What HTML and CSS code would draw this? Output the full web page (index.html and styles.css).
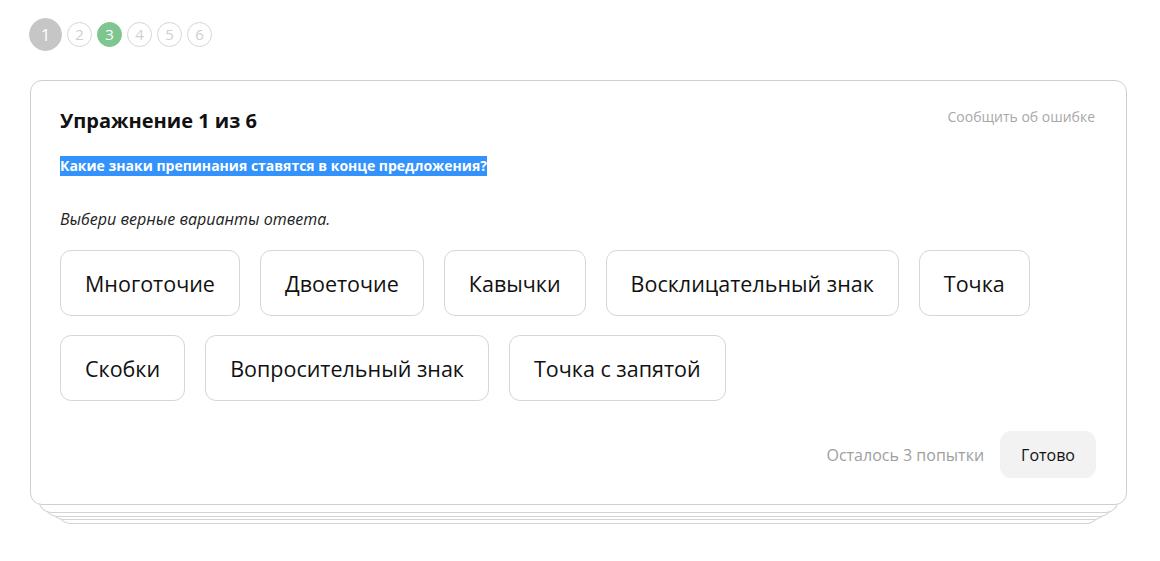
FILE: index.html
```html
<!DOCTYPE html>
<html lang="ru">
<head>
<meta charset="utf-8">
<title>Упражнение 1 из 6</title>
<link rel="stylesheet" href="styles.css">
</head>
<body>
<div class="steps">
  <span class="step step-current">1</span>
  <span class="step">2</span>
  <span class="step step-done">3</span>
  <span class="step">4</span>
  <span class="step">5</span>
  <span class="step">6</span>
</div>
<div class="deck">
  <div class="card">
    <div class="card-head">
      <h1 class="title">Упражнение 1 из 6</h1>
      <a class="report" href="#">Сообщить об ошибке</a>
    </div>
    <p class="question"><span class="selected">Какие знаки препинания ставятся в конце предложения?</span></p>
    <p class="hint">Выбери верные варианты ответа.</p>
    <div class="options">
      <button class="option">Многоточие</button>
      <button class="option">Двоеточие</button>
      <button class="option">Кавычки</button>
      <button class="option">Восклицательный знак</button>
      <button class="option">Точка</button>
      <button class="option">Скобки</button>
      <button class="option">Вопросительный знак</button>
      <button class="option">Точка с запятой</button>
    </div>
    <div class="card-foot">
      <span class="attempts">Осталось 3 попытки</span>
      <button class="done">Готово</button>
    </div>
  </div>
  <div class="sheet sheet-1"></div>
  <div class="sheet sheet-2"></div>
  <div class="sheet sheet-3"></div>
  <div class="sheet sheet-4"></div>
</div>
</body>
</html>
```
FILE: styles.css
```css
* { box-sizing: border-box; }
html, body { background: #fff; }
body {
  margin: 0;
  padding: 18px 33px 30px 30px;
  font-family: "Open Sans", "Noto Sans", sans-serif;
  color: #111;
}
.steps {
  display: flex;
  align-items: center;
  gap: 5px;
  margin-left: -1px;
  height: 32px;
}
.step {
  width: 25px;
  height: 25px;
  border-radius: 50%;
  border: 1px solid #d6d6d6;
  color: #cfcfcf;
  font-size: 15px;
  display: flex;
  align-items: center;
  justify-content: center;
  line-height: 1;
}
.step-current {
  width: 33px;
  height: 33px;
  background: #c6c6c6;
  border-color: #c6c6c6;
  color: #fff;
  font-size: 17px;
}
.step-done {
  background: #7ec690;
  border-color: #7ec690;
  color: #fff;
}
.deck {
  margin-top: 30px;
}
.card {
  position: relative;
  z-index: 5;
  background: #fff;
  border: 1px solid #cfcfcf;
  border-radius: 12px;
  padding: 24px 30px 26px 29px;
}
.sheet {
  position: relative;
  height: 24px;
  background: #fff;
  border: 1px solid #d3d3d3;
  border-top: 0;
  border-radius: 0 0 14px 14px;
}
.sheet-1 { z-index: 4; margin: -16px 8px 0; }
.sheet-2 { z-index: 3; margin: -20px 14px 0; }
.sheet-3 { z-index: 2; margin: -21px 20px 0; }
.sheet-4 { z-index: 1; margin: -20px 27px 0; }
.card-head {
  display: flex;
  justify-content: space-between;
  align-items: flex-start;
}
.title {
  margin: 0;
  font-size: 20px;
  font-weight: 700;
  line-height: 32px;
  color: #111;
}
.report {
  color: #a8a8a8;
  text-decoration: none;
  font-size: 14px;
  line-height: 24px;
  margin-right: 1px;
}
.question {
  margin: 19px 0 0;
  font-size: 14px;
  line-height: 20px;
  font-weight: 700;
  height: 20px;
}
.selected {
  display: inline-block;
  vertical-align: top;
  line-height: 20px;
  background: #3392fb;
  color: #fff;
}
.hint {
  margin: 31px 0 0;
  font-size: 16px;
  font-style: italic;
  line-height: 24px;
  color: #222;
}
.options {
  display: flex;
  flex-wrap: wrap;
  gap: 19px 20px;
  margin-top: 19px;
}
.option {
  height: 66px;
  padding: 0 24px;
  background: #fff;
  border: 1px solid #d6d6d6;
  border-radius: 11px;
  font-family: inherit;
  font-size: 21.5px;
  color: #111;
  cursor: pointer;
}
.card-foot {
  display: flex;
  justify-content: flex-end;
  align-items: center;
  gap: 16px;
  margin-top: 30px;
}
.attempts {
  color: #a0a0a0;
  font-size: 16px;
}
.done {
  height: 47px;
  padding: 0 21px;
  border: 0;
  border-radius: 11px;
  background: #f2f2f2;
  font-family: inherit;
  font-size: 16px;
  color: #111;
}
```
